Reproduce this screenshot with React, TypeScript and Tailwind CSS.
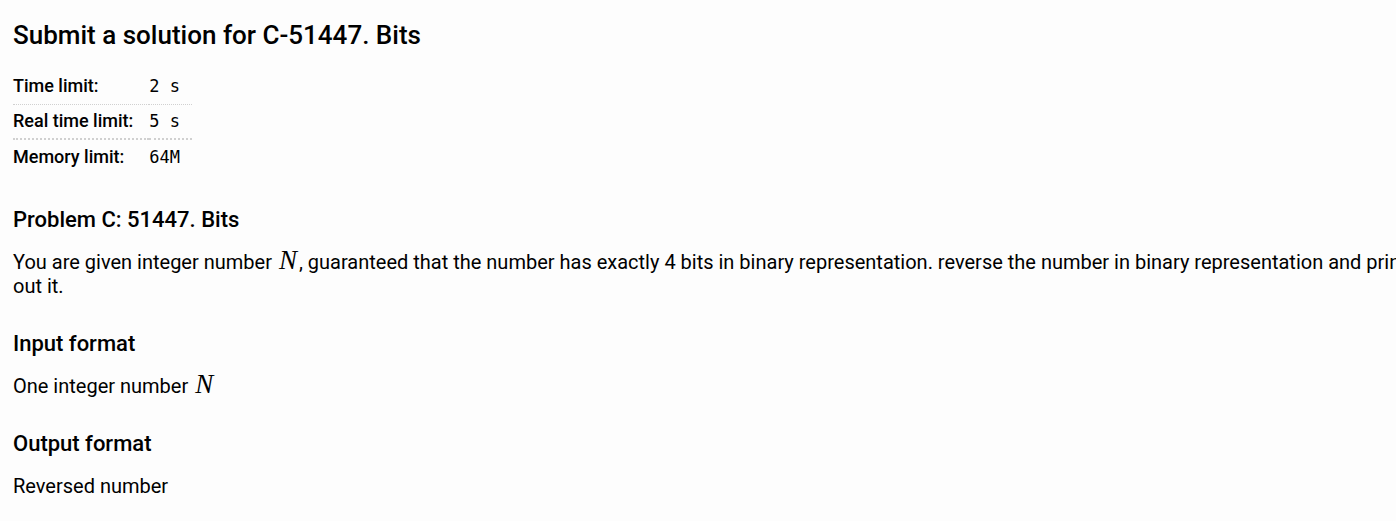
import React from "react";

const limits = [
  { label: "Time limit:", value: "2 s" },
  { label: "Real time limit:", value: "5 s" },
  { label: "Memory limit:", value: "64M" },
];

function MathVar({ children }: { children: React.ReactNode }) {
  return (
    <i className="mx-0.5 font-['Liberation_Serif',serif] text-[27px] leading-[0]">{children}</i>
  );
}

function Section({ title, children }: { title: string; children: React.ReactNode }) {
  return (
    <section>
      <h3 className="text-[22px] leading-7 font-medium">{title}</h3>
      <p className="mt-4 text-[20px] leading-6">{children}</p>
    </section>
  );
}

export default function App() {
  return (
    <div className="min-h-screen overflow-x-hidden bg-[#fdfdfd] font-['Roboto',sans-serif] text-black">
      <main className="-mr-6 flex flex-col px-[13px] pt-[19px] pb-5">
        <h2 className="text-[26px] leading-8 font-medium">Submit a solution for C-51447. Bits</h2>
        <table className="mt-[18px] self-start border-collapse text-left">
          <tbody>
            {limits.map((l) => (
              <tr
                key={l.label}
                className="h-[35px] border-b border-dotted border-[#d0d0d0] last:border-0 nth-[2]:border-b-2"
              >
                <th scope="row" className="p-0 pr-4 text-[18px] leading-6 font-medium">
                  {l.label}
                </th>
                <td className="p-0 pr-3 font-['DejaVu_Sans_Mono',monospace] text-[17px] leading-6">{l.value}</td>
              </tr>
            ))}
          </tbody>
        </table>
        <div className="mt-8 flex flex-col gap-8">
          <Section title="Problem C: 51447. Bits">
            You are given integer number <MathVar>N</MathVar>, guaranteed that the number has exactly 4 bits in binary
            representation. reverse the number in binary representation and print out it.
          </Section>
          <Section title="Input format">
            One integer number <MathVar>N</MathVar>
          </Section>
          <Section title="Output format">Reversed number</Section>
        </div>
      </main>
    </div>
  );
}
